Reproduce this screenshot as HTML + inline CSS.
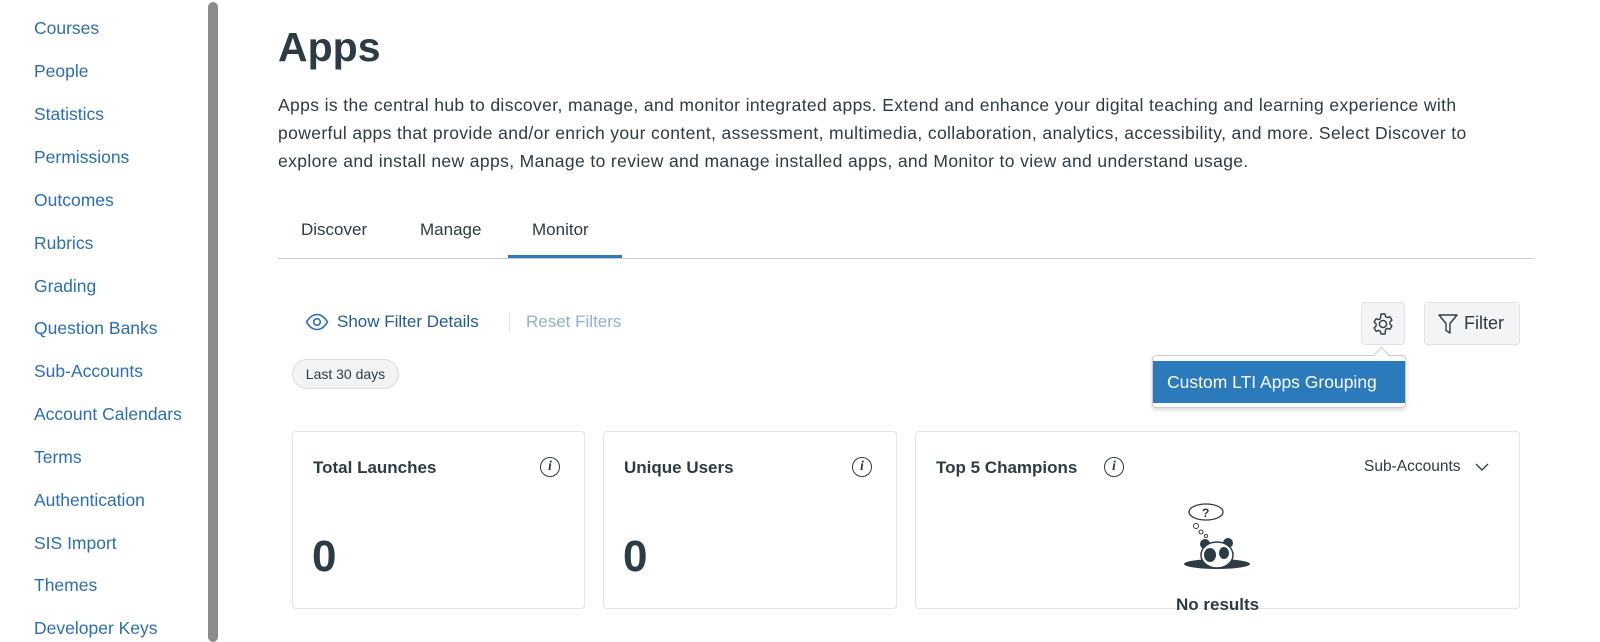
<!DOCTYPE html>
<html><head><meta charset="utf-8"><style>
*{box-sizing:border-box;margin:0;padding:0}
body{width:1600px;height:639px;overflow:hidden;background:#fff;font-family:"Liberation Sans",sans-serif;color:#2d3b45;position:relative}
.nav a{position:absolute;left:34px;font-size:17.5px;color:#2b6eb3;text-decoration:none;line-height:20px}
.sb{position:absolute;left:208px;top:2px;width:10px;height:640px;background:#8b8b8b;border-radius:5px}
h1{position:absolute;left:278px;top:24px;font-size:41px;font-weight:bold;color:#2d3b45}
p.d{position:absolute;left:278px;top:91px;white-space:nowrap;font-size:17.5px;letter-spacing:0.37px;line-height:28px;color:#2d3b45}
.tab{position:absolute;top:220px;font-size:17px;color:#2d3b45}
.abs{position:absolute}
.card{position:absolute;top:431px;height:178px;border:1px solid #e2e4e6;border-radius:4px;background:#fff}
.ct{position:absolute;left:20px;top:26px;font-size:17px;font-weight:bold;color:#2d3b45}
.num{position:absolute;left:19px;top:100px;font-size:44px;font-weight:bold;color:#2d3b45}
.info{position:absolute;top:25px;width:20px;height:20px;border:1.5px solid #2d3b45;border-radius:50%;font:italic bold 14px "Liberation Serif",serif;text-align:center;line-height:17px}
</style></head><body>
<div class="nav">
<a style="top:18px">Courses</a><a style="top:61px">People</a><a style="top:104px">Statistics</a><a style="top:147px">Permissions</a><a style="top:190px">Outcomes</a><a style="top:233px">Rubrics</a><a style="top:276px">Grading</a><a style="top:318px">Question Banks</a><a style="top:361px">Sub-Accounts</a><a style="top:404px">Account Calendars</a><a style="top:447px">Terms</a><a style="top:490px">Authentication</a><a style="top:533px">SIS Import</a><a style="top:575px">Themes</a><a style="top:618px">Developer Keys</a>
</div>
<div class="sb"></div>
<h1>Apps</h1>
<p class="d">Apps is the central hub to discover, manage, and monitor integrated apps. Extend and enhance your digital teaching and learning experience with<br>powerful apps that provide and/or enrich your content, assessment, multimedia, collaboration, analytics, accessibility, and more. Select Discover to<br>explore and install new apps, Manage to review and manage installed apps, and Monitor to view and understand usage.</p>
<div class="tab" style="left:301px">Discover</div>
<div class="tab" style="left:420px">Manage</div>
<div class="tab" style="left:532px">Monitor</div>
<div class="abs" style="left:278px;top:258px;width:1256px;height:1px;background:#c7cdd1"></div>
<div class="abs" style="left:508px;top:255px;width:114px;height:3px;background:#2b7abc"></div>
<svg class="abs" style="left:305px;top:313px" width="24" height="18" viewBox="0 0 24 18"><path d="M1.5 9C5 3 9 1.5 12 1.5S19 3 22.5 9C19 15 15 16.5 12 16.5S5 15 1.5 9Z" fill="none" stroke="#2b6eb3" stroke-width="1.6"/><circle cx="12" cy="9" r="3.3" fill="none" stroke="#2b6eb3" stroke-width="1.6"/></svg>
<div class="abs" style="left:337px;top:312px;font-size:17px;color:#1f5b99">Show Filter Details</div>
<div class="abs" style="left:509px;top:312px;width:1px;height:20px;background:#e3e6e8"></div>
<div class="abs" style="left:526px;top:312px;font-size:17px;color:#8fb0cf">Reset Filters</div>
<div class="abs" style="left:292px;top:359px;width:107px;height:30px;border:1px solid #dadcde;border-radius:15px;background:#f2f3f4;font-size:14px;line-height:28px;text-align:center;color:#2d3b45">Last 30 days</div>
<div class="abs" style="left:1361px;top:302px;width:44px;height:43px;border:1px solid #dfe2e4;border-radius:4px;background:#f3f4f5"></div>
<svg class="abs" style="left:1371px;top:312px" width="24" height="24" viewBox="0 0 24 24"><path d="M10 2h4l.6 2.6 1.8 1 2.5-.9 2 3.4-2 1.8v2.2l2 1.8-2 3.4-2.5-.9-1.8 1L14 22h-4l-.6-2.6-1.8-1-2.5.9-2-3.4 2-1.8v-2.2l-2-1.8 2-3.4 2.5.9 1.8-1Z" fill="none" stroke="#2d3b45" stroke-width="1.4" stroke-linejoin="round"/><circle cx="12" cy="12" r="3.6" fill="none" stroke="#2d3b45" stroke-width="1.4"/></svg>
<div class="abs" style="left:1424px;top:302px;width:96px;height:43px;border:1px solid #dfe2e4;border-radius:4px;background:#f3f4f5"></div>
<svg class="abs" style="left:1437px;top:313px" width="22" height="22" viewBox="0 0 22 22"><path d="M2 2h18l-7 8.5V20l-4-2.5v-7Z" fill="none" stroke="#2d3b45" stroke-width="1.4" stroke-linejoin="round"/></svg>
<div class="abs" style="left:1464px;top:313px;font-size:18px;color:#2d3b45">Filter</div>
<div class="abs" style="left:1152px;top:355px;width:254px;height:53px;border:1px solid #c7cdd1;border-radius:4px;background:#fff;box-shadow:0 2px 4px rgba(0,0,0,.15)"></div>
<div class="abs" style="left:1376px;top:349px;width:11px;height:11px;background:#fff;border-left:1px solid #c7cdd1;border-top:1px solid #c7cdd1;transform:rotate(45deg)"></div>
<div class="abs" style="left:1153px;top:361px;width:252px;height:42px;background:#2b7abc;color:#fff;font-size:17.5px;line-height:42px;padding-left:14px">Custom LTI Apps Grouping</div>
<div class="card" style="left:292px;width:293px"><div class="ct">Total Launches</div><div class="info" style="left:247px">i</div><div class="num">0</div></div>
<div class="card" style="left:603px;width:294px"><div class="ct">Unique Users</div><div class="info" style="left:248px">i</div><div class="num">0</div></div>
<div class="card" style="left:915px;width:605px"><div class="ct">Top 5 Champions</div><div class="info" style="left:188px">i</div>
<div class="abs" style="left:448px;top:26px;font-size:15.5px;color:#2d3b45">Sub-Accounts</div>
<svg class="abs" style="left:559px;top:30px" width="14" height="10" viewBox="0 0 14 10"><path d="M1 2l6 6 6-6" fill="none" stroke="#2d3b45" stroke-width="1.3"/></svg>
<svg class="abs" style="left:266px;top:70px" width="72" height="72" viewBox="0 0 72 72"><ellipse cx="24" cy="10" rx="17" ry="8" fill="none" stroke="#2d3b45" stroke-width="1.3"/><text x="20" y="15" font-family="Liberation Sans" font-weight="bold" font-size="12" fill="#2d3b45">?</text><circle cx="14" cy="24" r="2.5" fill="none" stroke="#2d3b45"/><circle cx="19" cy="30" r="2" fill="none" stroke="#2d3b45"/><circle cx="24" cy="34" r="1.6" fill="none" stroke="#2d3b45"/><ellipse cx="35" cy="62" rx="33" ry="5" fill="#2d3b45"/><circle cx="23" cy="42" r="5" fill="#2d3b45"/><circle cx="46" cy="41" r="5" fill="#2d3b45"/><ellipse cx="35" cy="53" rx="16" ry="13" fill="#fff" stroke="#2d3b45" stroke-width="1.5"/><ellipse cx="28" cy="53" rx="6" ry="7" fill="#2d3b45"/><ellipse cx="42" cy="51" rx="5" ry="6" fill="#2d3b45"/></svg>
<div class="abs" style="left:260px;top:163px;font-size:17px;font-weight:bold;color:#2d3b45">No results</div>
</div>
</body></html>
